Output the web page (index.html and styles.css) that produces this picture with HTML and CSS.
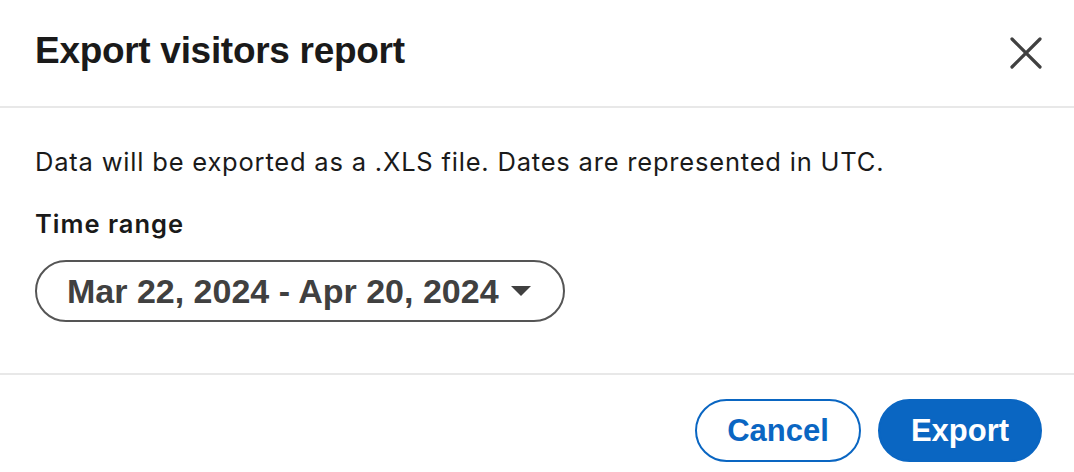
FILE: index.html
```html
<!DOCTYPE html>
<html lang="en">
<head>
<meta charset="utf-8">
<title>Export visitors report</title>
<link rel="stylesheet" href="styles.css">
</head>
<body>
<div class="modal">
  <header class="modal-header">
    <h2 class="modal-title">Export visitors report</h2>
    <button class="close-btn" aria-label="Dismiss">
      <svg width="32" height="32" viewBox="0 0 32 32" aria-hidden="true">
        <path d="M2 2 L30 30 M30 2 L2 30" stroke="#404040" stroke-width="3.2" stroke-linecap="round" fill="none"/>
      </svg>
    </button>
  </header>
  <section class="modal-body">
    <p class="note">Data will be exported as a .XLS file. Dates are represented in UTC.</p>
    <div class="field-label">Time range</div>
    <button class="range-select">
      <span class="range-text">Mar 22, 2024 - Apr 20, 2024</span>
      <svg class="caret" width="20" height="10" viewBox="0 0 20 10" aria-hidden="true">
        <path d="M0 0 L20 0 L10 10 Z" fill="#404040"/>
      </svg>
    </button>
  </section>
  <footer class="modal-footer">
    <button class="btn btn-secondary">Cancel</button>
    <button class="btn btn-primary">Export</button>
  </footer>
</div>
</body>
</html>
```

FILE: styles.css
```css
* { box-sizing: border-box; }

html, body {
  margin: 0;
  padding: 0;
  background: #ffffff;
}

body {
  font-family: "Liberation Sans", Arial, sans-serif;
  color: rgba(0, 0, 0, 0.9);
}

.modal {
  width: 1074px;
  height: 472px;
  overflow: hidden;
}

.modal-header {
  height: 108px;
  display: flex;
  align-items: center;
  justify-content: space-between;
  padding: 0 32px 0 35px;
  border-bottom: 2px solid #e8e8e8;
}

.modal-title {
  margin: 0;
  font-size: 37px;
  font-weight: 700;
  line-height: 44px;
  letter-spacing: -0.3px;
  color: #1a1a1a;
  padding-bottom: 4px;
}

.close-btn {
  border: 0;
  background: none;
  padding: 0;
  width: 32px;
  height: 32px;
  display: flex;
  align-items: center;
  justify-content: center;
  cursor: pointer;
}

.modal-body {
  height: 267px;
  padding: 39px 35px 0 35px;
  border-bottom: 2px solid #e8e8e8;
}

.note {
  margin: 0;
  font-family: Inter, "Liberation Sans", sans-serif;
  font-size: 25.5px;
  letter-spacing: 0.8px;
  line-height: 30px;
  color: #1a1a1a;
}

.field-label {
  margin-top: 32px;
  font-family: Inter, "Liberation Sans", sans-serif;
  font-size: 25.5px;
  letter-spacing: 1px;
  line-height: 30px;
  font-weight: 600;
  color: #1a1a1a;
}

.range-select {
  margin-top: 21px;
  width: 530px;
  height: 62px;
  border: 2px solid #555555;
  border-radius: 31px;
  background: #ffffff;
  display: flex;
  align-items: center;
  justify-content: space-between;
  padding: 0 32px 0 30px;
  font-family: inherit;
  cursor: pointer;
}

.range-text {
  font-size: 34px;
  font-weight: 700;
  color: #404040;
  line-height: 38px;
}

.caret { display: block; }

.modal-footer {
  display: flex;
  justify-content: flex-end;
  gap: 17px;
  padding: 24px 32px 0 0;
}

.btn {
  height: 63px;
  border-radius: 32px;
  font-family: inherit;
  font-size: 31px;
  font-weight: 700;
  padding: 0;
  cursor: pointer;
}

.btn-secondary {
  width: 166px;
  background: #ffffff;
  color: #0a66c2;
  border: 2px solid #0a66c2;
}

.btn-primary {
  width: 164px;
  background: #0a66c2;
  color: #ffffff;
  border: 2px solid #0a66c2;
}
```
